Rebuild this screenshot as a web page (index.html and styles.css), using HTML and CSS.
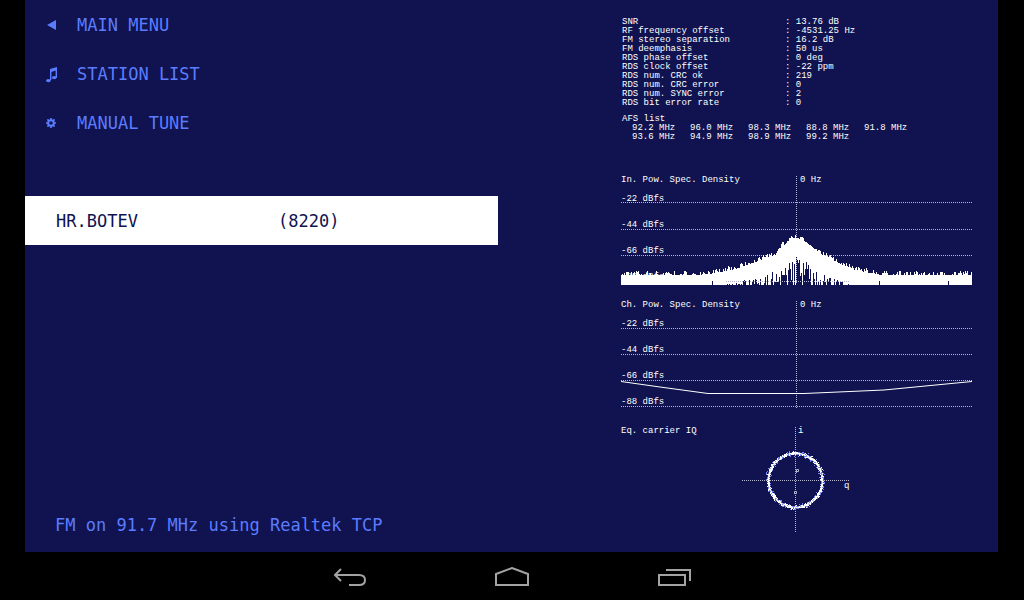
FILE: index.html
```html
<!DOCTYPE html>
<html lang="en">
<head>
<meta charset="utf-8">
<meta name="viewport" content="width=device-width, initial-scale=1">
<title>FM Radio</title>
<link rel="stylesheet" href="styles.css">
</head>
<body>
<main class="app">
  <section class="panel">
    <nav class="menu" aria-label="Radio menu">
      <button class="menu-item" type="button">
        <svg class="menu-icon" viewBox="0 0 16 20" aria-hidden="true"><path d="M1 10L10 5V15Z"/></svg>
        MAIN MENU
      </button>
      <button class="menu-item" type="button">
        <svg class="menu-icon" viewBox="0 0 16 20" aria-hidden="true"><path d="M4 5L11 3V14H9.6V6.4L5.4 8V16H4Z"/><ellipse cx="2.4" cy="16.6" rx="2.4" ry="1.6"/><ellipse cx="8.2" cy="13.6" rx="2.3" ry="1.6"/></svg>
        STATION LIST
      </button>
      <button class="menu-item" type="button">
        <svg class="menu-icon" viewBox="0 0 16 20" aria-hidden="true"><circle cx="5" cy="10" r="2.8" fill="none" stroke="currentColor" stroke-width="2"/><path d="M5 5V7M5 13V15M0 10H2M8 10H10M1.4 6.4L3 8M7 12L8.6 13.6M8.6 6.4L7 8M3 12L1.4 13.6" stroke="currentColor" stroke-width="1.7"/></svg>
        MANUAL TUNE
      </button>
    </nav>
    <button class="station" type="button"><span>HR.BOTEV</span><span>(8220)</span></button>
    <p class="status">FM on 91.7 MHz using Realtek TCP</p>
  </section>
  <section class="readout">
    <table class="stats">
      <tbody>
        <tr><th>SNR</th><td>: 13.76 dB</td></tr>
        <tr><th>RF frequency offset</th><td>: -4531.25 Hz</td></tr>
        <tr><th>FM stereo separation</th><td>: 16.2 dB</td></tr>
        <tr><th>FM deemphasis</th><td>: 50 us</td></tr>
        <tr><th>RDS phase offset</th><td>: 0 deg</td></tr>
        <tr><th>RDS clock offset</th><td>: -22 ppm</td></tr>
        <tr><th>RDS num. CRC ok</th><td>: 219</td></tr>
        <tr><th>RDS num. CRC error</th><td>: 0</td></tr>
        <tr><th>RDS num. SYNC error</th><td>: 2</td></tr>
        <tr><th>RDS bit error rate</th><td>: 0</td></tr>
      </tbody>
    </table>
    <h2 class="afs-title">AFS list</h2>
    <ul class="afs">
      <li>92.2 MHz</li><li>96.0 MHz</li><li>98.3 MHz</li><li>88.8 MHz</li><li>91.8 MHz</li>
      <li>93.6 MHz</li><li>94.9 MHz</li><li>98.9 MHz</li><li>99.2 MHz</li>
    </ul>
    <div class="plots">
      <svg class="plot" viewBox="0 0 352 113" role="img" aria-label="Input power spectral density">
        <path class="grid" d="M1 30.5H352M1 57.5H352M1 83.5H352M176.5 4V112"/>
        <text x="1" y="10">In. Pow. Spec. Density</text><text x="180" y="10">0 Hz</text>
        <text x="1" y="29">-22 dBfs</text><text x="1" y="55">-44 dBfs</text><text x="1" y="81">-66 dBfs</text><text x="1" y="107">-88 dBfs</text>
        <path id="spectrum" class="bars"/>
        <path class="grid" d="M106 109.5H230"/>
      </svg>
      <svg class="plot" viewBox="0 0 352 113" role="img" aria-label="Channel power spectral density">
        <path class="grid" d="M1 31.5H352M1 57.5H352M1 83.5H352M1 109.5H352M176.5 4V111"/>
        <text x="1" y="10">Ch. Pow. Spec. Density</text><text x="180" y="10">0 Hz</text>
        <text x="1" y="29">-22 dBfs</text><text x="1" y="55">-44 dBfs</text><text x="1" y="81">-66 dBfs</text><text x="1" y="107">-88 dBfs</text>
        <path class="curve" d="M1 84.5L40 90L88 96.5H184L264 93L352 84.5"/>
      </svg>
      <svg class="plot" viewBox="0 0 352 113" role="img" aria-label="Equalized carrier IQ">
        <path class="grid" d="M122 58.5H229M175.5 5V111"/>
        <text x="1" y="11">Eq. carrier IQ</text><text x="178" y="11">i</text><text x="224" y="66">q</text>
        <circle class="ring" cx="175.5" cy="58.5" r="27"/>
        <path class="dots dots-soft" id="iq-soft"/>
        <path class="dots" id="iq"/>
        <path class="marks" d="M176.5 51V47.5H178.5V49.5H176M174.5 72V69.5H176.5V71.5H174"/>
      </svg>
    </div>
  </section>
</main>
<nav class="system" aria-label="System">
  <button class="key" type="button" aria-label="Back"><svg viewBox="0 0 36 22"><path d="M9 2L3 8L9 14M3 8H27Q33 8 33 13T27 18H17"/></svg></button>
  <button class="key" type="button" aria-label="Home"><svg viewBox="0 0 36 22"><path d="M2 18V7L18 1L34 7V18Z"/></svg></button>
  <button class="key" type="button" aria-label="Recent apps"><svg viewBox="0 0 36 22"><path d="M3 8H29V18H3ZM10 3H34V14"/></svg></button>
</nav>
<script src="plots.js"></script>
</body>
</html>
```
FILE: styles.css
```css
* { box-sizing: border-box; }
html, body { height: 100%; }
body {
  margin: 0;
  display: flex;
  flex-direction: column;
  background: #000;
  color: #5b7cff;
  font-family: "DejaVu Sans Mono", monospace;
  font-size: 17px;
}
button {
  border: 0;
  padding: 0;
  background: none;
  color: inherit;
  font: inherit;
  text-align: left;
  cursor: pointer;
}
.app {
  flex: 1;
  display: grid;
  grid-template-columns: 1fr 352px;
  column-gap: 122px;
  margin: 0 26px 0 25px;
  padding-right: 26px;
  background: #10134f;
}
.panel { display: flex; flex-direction: column; }
.menu { display: flex; flex-direction: column; margin-bottom: 49px; }
.menu-item {
  display: flex;
  align-items: center;
  gap: 15px;
  height: 49px;
  padding-left: 21px;
}
.menu-icon { width: 16px; height: 20px; fill: currentColor; }
.station {
  display: grid;
  grid-template-columns: 222px 1fr;
  align-items: center;
  height: 49px;
  padding-left: 31px;
  background: #fff;
  color: #10134f;
}
.status { margin: auto 0 16px 30px; line-height: 22px; }
.readout {
  padding-top: 18px;
  color: #fff;
  font-family: "Liberation Mono", monospace;
  font-size: 9px;
  line-height: 9px;
}
.stats { border-collapse: collapse; margin-left: 2px; }
.stats th, .stats td { padding: 0; font-weight: normal; text-align: left; }
.stats th { width: 163px; }
.afs-title { margin: 7px 0 0 2px; font-size: 9px; font-weight: normal; }
.afs {
  display: grid;
  grid-template-columns: repeat(5, 58px);
  margin: 0 0 30px;
  padding: 0 0 0 12px;
  list-style: none;
}
.plots { display: flex; flex-direction: column; gap: 12px; }
.plot { display: block; width: 100%; overflow: visible; fill: #fff; }
.grid {
  fill: none;
  stroke: #b4b6d0;
  stroke-dasharray: 1 1;
  shape-rendering: crispEdges;
}
.bars { fill: #fff; shape-rendering: crispEdges; }
.curve { fill: none; stroke: #fff; }
.ring { fill: none; stroke: #d5dcff; stroke-width: 2; }
.dots { fill: #fff; }
.dots-soft { fill: #7489f5; }
.marks { fill: none; stroke: #b4b6d0; }
.system { display: flex; justify-content: center; height: 48px; }
.key { display: flex; align-items: center; justify-content: center; width: 162px; }
.key svg { width: 36px; height: 22px; margin-top: 4px; fill: none; stroke: #a3a3a3; stroke-width: 2; }
```
FILE: plots.js
```js
let seed = 7;
function rand() {
  seed = (seed * 16807) % 2147483647;
  return seed / 2147483647;
}

function level(points, x) {
  for (let i = 1; i < points.length; i++) {
    const [x0, y0] = points[i - 1];
    const [x1, y1] = points[i];
    if (x <= x1) return y0 + (y1 - y0) * (x - x0) / (x1 - x0);
  }
  return points[points.length - 1][1];
}

const peak = [[0, 103], [80, 103], [95, 101], [115, 97], [130, 92], [145, 86], [155, 83],
  [158, 77], [166, 71], [172, 66], [178, 66], [186, 70], [192, 75], [200, 82], [208, 85],
  [220, 92], [235, 98], [250, 101], [262, 103], [352, 103]];
const floor = [[106, 112], [130, 107], [145, 101], [160, 94], [176, 84], [190, 91],
  [205, 102], [220, 109], [232, 112]];

let bars = "";
for (let x = 1; x < 352; x++) {
  const top = Math.round(level(peak, x) - (rand() > 0.5 ? rand() * 4 : 0));
  let bottom = 113;
  if (x > 106 && x < 232) {
    const nearness = 1 - Math.abs(x - 176) / 70;
    if (rand() < 0.2 + nearness * 0.72) {
      const low = level(floor, x);
      bottom = Math.round(low + rand() * (113 - low) * 0.9);
    }
  } else if (x === 328 || x === 92 || x === 259) {
    bottom = 109;
  }
  bars += `M${x} ${top}h1V${bottom}h-1Z`;
}
document.getElementById("spectrum").setAttribute("d", bars);

function ring(count, spread) {
  let d = "";
  for (let i = 0; i < count; i++) {
    const a = rand() * Math.PI * 2;
    const r = 27 + (rand() + rand() - 1) * spread;
    d += `M${Math.round(175 + r * Math.cos(a))} ${Math.round(58 + r * Math.sin(a))}h1v1h-1Z`;
  }
  return d;
}
document.getElementById("iq-soft").setAttribute("d", ring(420, 3));
document.getElementById("iq").setAttribute("d", ring(560, 2));
```
